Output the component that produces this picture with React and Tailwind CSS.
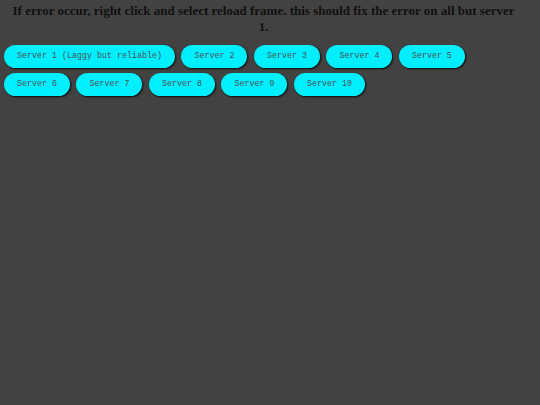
export default function App() {
  const servers = [
    "Server 1 (Laggy but reliable)",
    "Server 2",
    "Server 3",
    "Server 4",
    "Server 5",
    "Server 6",
    "Server 7",
    "Server 8",
    "Server 9",
    "Server 10",
  ];
  return (
    <div className="min-h-screen bg-[#424242]">
      <h1
        className="pl-[8px] pr-[21px] pt-[3px] text-center text-[13px] font-bold leading-[16px] text-[#111]"
        style={{ fontFamily: '"Liberation Serif", serif' }}
      >
        If error occur, right click and select reload frame. this should fix the error on all but server 1.
      </h1>
      <div className="mt-[10px] flex flex-wrap gap-x-[6.5px] gap-y-[5px] pl-[4px] pr-[24px]">
        {servers.map((s) => (
          <button
            key={s}
            className="h-[23px] whitespace-pre rounded-full bg-[#00efff] px-[13px] text-[8.33px] text-[#505050] shadow-[1px_1px_2px_rgba(0,0,0,0.85)]"
            style={{ fontFamily: '"Liberation Mono", monospace' }}
          >
            {s}
          </button>
        ))}
      </div>
    </div>
  );
}
